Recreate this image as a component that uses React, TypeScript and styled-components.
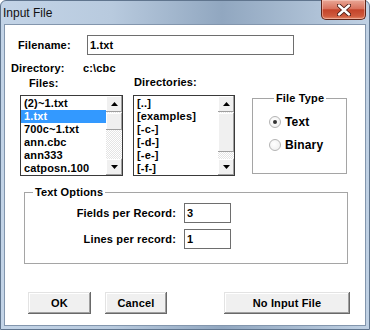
import styled, { createGlobalStyle } from "styled-components";

const GlobalStyle = createGlobalStyle`
  html, body { margin: 0; padding: 0; background: #fff; }
  body { font-family: "Liberation Sans", Arial, sans-serif; }
`;

const Frame = styled.div`
  width: 370px;
  height: 330px;
  box-sizing: border-box;
  display: flex;
  flex-direction: column;
  padding-bottom: 3px;
  border: 1px solid #60758e;
  border-radius: 6px 6px 0 0;
  background: linear-gradient(
    90deg,
    #c3d4e7 0%,
    #b8cade 30%,
    #91a7c0 60%,
    #a5b9cf 78%,
    #c0d1e4 100%
  );
`;

const TitleBar = styled.div`
  height: 23px;
  display: flex;
  align-items: flex-start;
  justify-content: space-between;
`;

const Title = styled.div`
  margin: 5px 0 0 2px;
  font-size: 12px;
  line-height: 14px;
  color: #111;
`;

const CloseButton = styled.div`
  width: 45px;
  height: 20px;
  margin: -1px 3px 0 0;
  box-sizing: border-box;
  display: flex;
  align-items: center;
  justify-content: center;
  border: 1px solid #5e2418;
  border-top: none;
  border-radius: 0 0 5px 5px;
  background: linear-gradient(
    180deg,
    #e9a796 0%,
    #d9735e 45%,
    #c4442a 52%,
    #cf5a3d 85%,
    #e48a6a 100%
  );
  box-shadow: inset 0 0 0 1px rgba(255, 220, 210, 0.45);
`;

const Client = styled.div`
  flex: 1;
  margin: 0 3px;
  box-sizing: border-box;
  border: 1px solid #8396ad;
  background: #fff;
  padding-top: 10px;
  font-size: 11px;
  font-weight: bold;
  letter-spacing: 0.15px;
  color: #000;
`;

const FieldRow = styled.div`
  display: flex;
  align-items: center;
  height: 20px;
  padding-left: 13px;
`;

const FieldLabel = styled.span<{ $w: number }>`
  width: ${(p) => p.$w}px;
  line-height: 14px;
`;

const TextBox = styled.div<{ $w: number }>`
  width: ${(p) => p.$w}px;
  height: 20px;
  box-sizing: border-box;
  border: 1px solid #6e6e6e;
  padding-left: 2px;
  line-height: 18px;
`;

const DirRow = styled.div`
  display: flex;
  align-items: center;
  height: 14px;
  margin-top: 6px;
  padding-left: 6px;
`;

const ListsRow = styled.div`
  display: flex;
  align-items: flex-start;
  margin-top: 1px;
  padding-left: 15px;
`;

const ListColumn = styled.div<{ $w: number; $gap?: number }>`
  width: ${(p) => p.$w}px;
  margin-left: ${(p) => p.$gap ?? 0}px;
`;

const ListCaption = styled.div<{ $indent: number; $lift?: number }>`
  height: 14px;
  line-height: 14px;
  padding-left: ${(p) => p.$indent}px;
  margin-top: ${(p) => -(p.$lift ?? 0)}px;
  margin-bottom: ${(p) => 5 + (p.$lift ?? 0)}px;
`;

const ListBox = styled.div`
  height: 81px;
  box-sizing: border-box;
  border: 1px solid #3a3a3a;
  display: flex;
`;

const Items = styled.div`
  flex: 1;
  padding-top: 1px;
  overflow: hidden;
`;

const Item = styled.div<{ $selected?: boolean }>`
  height: 13px;
  line-height: 13px;
  padding-left: 3px;
  white-space: nowrap;
  background: ${(p) => (p.$selected ? "#3399ff" : "transparent")};
  color: ${(p) => (p.$selected ? "#fff" : "#000")};
`;

const ScrollBar = styled.div`
  width: 16px;
  display: flex;
  flex-direction: column;
  background-color: #fff;
  background-image: repeating-conic-gradient(#e4e4e4 0% 25%, #fff 0% 50%);
  background-size: 2px 2px;
`;

const ScrollButton = styled.div`
  height: 16px;
  box-sizing: border-box;
  display: flex;
  align-items: center;
  justify-content: center;
  background: #f0f0f0;
  box-shadow: inset -1px -1px #a0a0a0, inset 1px 1px #fff,
    inset 0 0 0 1px #d8d8d8;
`;

const Thumb = styled.div<{ $h: number }>`
  height: ${(p) => p.$h}px;
  margin-top: 1px;
  box-sizing: border-box;
  background: #f0f0f0;
  box-shadow: inset -1px -1px #a0a0a0, inset 1px 1px #fff,
    inset 0 0 0 1px #d8d8d8;
`;

const Track = styled.div`
  flex: 1;
`;

const GroupBox = styled.fieldset<{ $w: number }>`
  margin: 0;
  padding: 0;
  width: ${(p) => p.$w}px;
  box-sizing: border-box;
  border: 1px solid #a5a5a5;
  min-width: 0;
`;

const GroupTitle = styled.legend<{ $indent: number }>`
  margin-left: ${(p) => p.$indent}px;
  padding: 0 2px;
  line-height: 14px;
  font-size: 11px;
`;

const FileTypeBox = styled(GroupBox)`
  margin: 15px 0 0 17px;
  height: 83px;
  padding: 10px 0 0 16px;
  display: flex;
  flex-direction: column;
  gap: 9px;
`;

const RadioRow = styled.label`
  display: flex;
  align-items: center;
  gap: 4px;
  height: 14px;
  font-size: 12px;
`;

const RadioDot = styled.span<{ $checked?: boolean }>`
  width: 12px;
  height: 12px;
  box-sizing: border-box;
  border-radius: 50%;
  border: 1px solid #b4b4b4;
  background: radial-gradient(circle at 40% 40%, #fff 0%, #ececec 100%);
  display: flex;
  align-items: center;
  justify-content: center;
  &::after {
    content: "";
    width: 4px;
    height: 4px;
    border-radius: 50%;
    background: ${(p) => (p.$checked ? "#333" : "transparent")};
  }
`;

const OptionsBox = styled(GroupBox)`
  margin: 9px 0 0 19px;
  padding: 4px 0 14px 0;
`;

const OptionsGrid = styled.div`
  display: grid;
  grid-template-columns: 151px 47px;
  column-gap: 8px;
  row-gap: 6px;
  align-items: center;
`;

const OptionLabel = styled.span`
  text-align: right;
`;

const ButtonRow = styled.div`
  display: flex;
  margin-top: 28px;
  padding-left: 23px;
`;

const Button = styled.button<{ $w: number; $gap?: number }>`
  width: ${(p) => p.$w}px;
  height: 22px;
  margin-left: ${(p) => p.$gap ?? 0}px;
  padding: 0;
  border: none;
  background: #f0f0f0;
  font-family: "Liberation Sans", Arial, sans-serif;
  font-size: 11px;
  font-weight: bold;
  letter-spacing: 0.15px;
  color: #000;
  box-shadow: inset -1px -1px #696969, inset 1px 1px #e3e3e3,
    inset -2px -2px #a0a0a0, inset 2px 2px #fff;
`;

const Arrow = ({ down }: { down?: boolean }) => (
  <svg width="7" height="4" viewBox="0 0 7 4">
    <polygon
      points={down ? "0,0 7,0 3.5,4" : "0,4 7,4 3.5,0"}
      fill="#000"
    />
  </svg>
);

const CloseGlyph = () => (
  <svg width="14" height="12" viewBox="0 0 14 12">
    <path d="M2 1.5 L12 10.5 M12 1.5 L2 10.5" stroke="#4a1a12" strokeWidth="4.2" strokeLinecap="round" />
    <path d="M2 1.5 L12 10.5 M12 1.5 L2 10.5" stroke="#fff" strokeWidth="2.4" strokeLinecap="round" />
  </svg>
);

const Scroller = ({ thumb }: { thumb: number }) => (
  <ScrollBar>
    <ScrollButton>
      <Arrow />
    </ScrollButton>
    <Thumb $h={thumb} />
    <Track />
    <ScrollButton>
      <Arrow down />
    </ScrollButton>
  </ScrollBar>
);

const files = ["(2)~1.txt", "1.txt", "700c~1.txt", "ann.cbc", "ann333", "catposn.100"];
const dirs = ["[..]", "[examples]", "[-c-]", "[-d-]", "[-e-]", "[-f-]"];

export default function App() {
  return (
    <>
      <GlobalStyle />
      <Frame>
        <TitleBar>
          <Title>Input File</Title>
          <CloseButton>
            <CloseGlyph />
          </CloseButton>
        </TitleBar>
        <Client>
          <FieldRow>
            <FieldLabel $w={69}>Filename:</FieldLabel>
            <TextBox $w={207}>1.txt</TextBox>
          </FieldRow>
          <DirRow>
            <FieldLabel $w={72}>Directory:</FieldLabel>
            <span>c:\cbc</span>
          </DirRow>
          <ListsRow>
            <ListColumn $w={103}>
              <ListCaption $indent={9}>Files:</ListCaption>
              <ListBox>
                <Items>
                  {files.map((f) => (
                    <Item key={f} $selected={f === "1.txt"}>
                      {f}
                    </Item>
                  ))}
                </Items>
                <Scroller thumb={17} />
              </ListBox>
            </ListColumn>
            <ListColumn $w={102} $gap={10}>
              <ListCaption $indent={1} $lift={1}>
                Directories:
              </ListCaption>
              <ListBox>
                <Items>
                  {dirs.map((d) => (
                    <Item key={d}>{d}</Item>
                  ))}
                </Items>
                <Scroller thumb={39} />
              </ListBox>
            </ListColumn>
            <FileTypeBox $w={95}>
              <GroupTitle $indent={5}>File Type</GroupTitle>
              <RadioRow>
                <RadioDot $checked />
                Text
              </RadioRow>
              <RadioRow>
                <RadioDot />
                Binary
              </RadioRow>
            </FileTypeBox>
          </ListsRow>
          <OptionsBox $w={324}>
            <GroupTitle $indent={8}>Text Options</GroupTitle>
            <OptionsGrid>
              <OptionLabel>Fields per Record:</OptionLabel>
              <TextBox $w={47}>3</TextBox>
              <OptionLabel>Lines per record:</OptionLabel>
              <TextBox $w={47}>1</TextBox>
            </OptionsGrid>
          </OptionsBox>
          <ButtonRow>
            <Button $w={63}>OK</Button>
            <Button $w={62} $gap={14}>
              Cancel
            </Button>
            <Button $w={126} $gap={57}>
              No Input File
            </Button>
          </ButtonRow>
        </Client>
      </Frame>
    </>
  );
}
